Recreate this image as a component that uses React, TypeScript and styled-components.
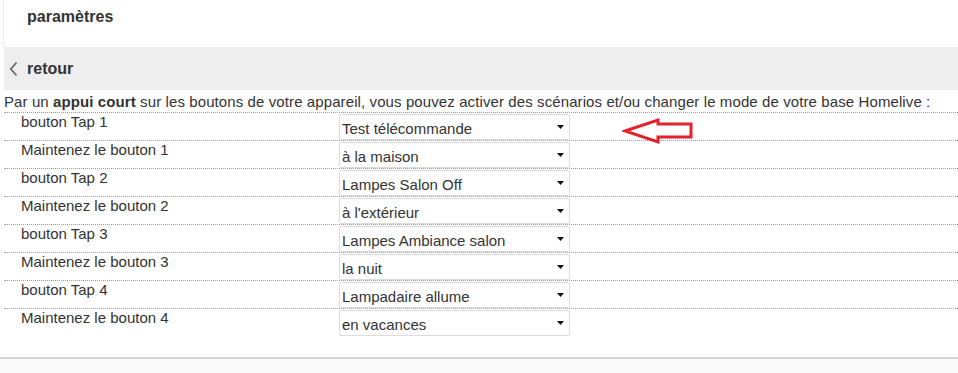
import React from "react";
import styled, { createGlobalStyle } from "styled-components";

const GlobalStyle = createGlobalStyle`
  html, body { margin: 0; padding: 0; background: #ffffff; }
  body { font-family: "Liberation Sans", Arial, sans-serif; color: #333333; }
`;

const Page = styled.div`
  width: 958px;
  height: 373px;
  overflow: hidden;
  background: #fafafa;
`;

const Panel = styled.div`
  background: #ffffff;
  border-bottom: 2px solid #d5d5d5;
`;

const Header = styled.div`
  height: 38px;
  margin-left: 3px;
  padding: 8px 0 0 23px;
  border-left: 1px solid #ededed;
  display: flex;
  align-items: flex-start;
  font-size: 16px;
  line-height: 18px;
  font-weight: bold;
  color: #333;
  margin-bottom: 1px;
`;

const BackBar = styled.div`
  margin-left: 4px;
  height: 43px;
  background: #eeeeee;
  display: flex;
  align-items: center;
  padding-left: 5px;
  gap: 9px;
  font-size: 16px;
  font-weight: bold;
  color: #333;
  padding-top: 1px;
  box-sizing: border-box;
`;

const Content = styled.div`
  margin-left: 4px;
  padding-bottom: 21px;
`;

const Intro = styled.div`
  height: 22px;
  line-height: 23px;
  font-size: 15px;
  letter-spacing: 0.1px;
  border-bottom: 1px dotted #9a9a9a;
  white-space: nowrap;
  b { font-weight: bold; }
`;

const Row = styled.div<{ $last?: boolean }>`
  height: 27px;
  display: flex;
  align-items: flex-start;
  border-bottom: ${(p) => (p.$last ? "none" : "1px dotted #9a9a9a")};
`;

const Label = styled.div`
  width: 318px;
  padding-left: 17px;
  font-size: 15px;
  line-height: 17px;
  padding-top: 0px;
  color: #333;
`;

const SelectBox = styled.div`
  box-sizing: border-box;
  width: 231px;
  height: 26px;
  margin-top: 1px;
  border: 1px solid #dcdcdc;
  border-radius: 2px;
  background: #fff;
  display: flex;
  align-items: center;
  justify-content: space-between;
  padding: 3px 0 0 2px;
  font-size: 15px;
  color: #333;
`;

const Caret = styled.svg`
  margin-right: 5px;
  margin-top: -4px;
`;

const Arrow = styled.svg`
  margin-left: 52px;
  margin-top: 4px;
`;

const rows: { label: string; value: string }[] = [
  { label: "bouton Tap 1", value: "Test télécommande" },
  { label: "Maintenez le bouton 1", value: "à la maison" },
  { label: "bouton Tap 2", value: "Lampes Salon Off" },
  { label: "Maintenez le bouton 2", value: "à l'extérieur" },
  { label: "bouton Tap 3", value: "Lampes Ambiance salon" },
  { label: "Maintenez le bouton 3", value: "la nuit" },
  { label: "bouton Tap 4", value: "Lampadaire allume" },
  { label: "Maintenez le bouton 4", value: "en vacances" },
];

export default function App() {
  return (
    <>
      <GlobalStyle />
      <Page>
        <Panel>
          <Header>paramètres</Header>
          <BackBar>
            <svg width="9" height="16" viewBox="0 0 9 16">
              <path d="M7.5 1.5 L1.8 8 L7.5 14.5" fill="none" stroke="#6a6a6a" strokeWidth="1.8" />
            </svg>
            <span>retour</span>
          </BackBar>
          <Content>
            <Intro>
              Par un <b>appui court</b> sur les boutons de votre appareil, vous pouvez activer des scénarios et/ou changer le mode de votre base Homelive :
            </Intro>
            {rows.map((r, i) => (
              <Row key={i} $last={i === rows.length - 1}>
                <Label>{r.label}</Label>
                <SelectBox>
                  <span>{r.value}</span>
                  <Caret width="7" height="4" viewBox="0 0 7 4">
                    <path d="M0 0 H7 L3.5 4 Z" fill="#111" />
                  </Caret>
                </SelectBox>
                {i === 0 && (
                  <Arrow width="72" height="28" viewBox="0 0 72 28">
                    <polygon
                      points="3,14 36,3 36,7 69,7 69,20 36,20 36,25"
                      fill="none"
                      stroke="#e3222b"
                      strokeWidth="3"
                      strokeLinejoin="miter"
                    />
                  </Arrow>
                )}
              </Row>
            ))}
          </Content>
        </Panel>
      </Page>
    </>
  );
}
